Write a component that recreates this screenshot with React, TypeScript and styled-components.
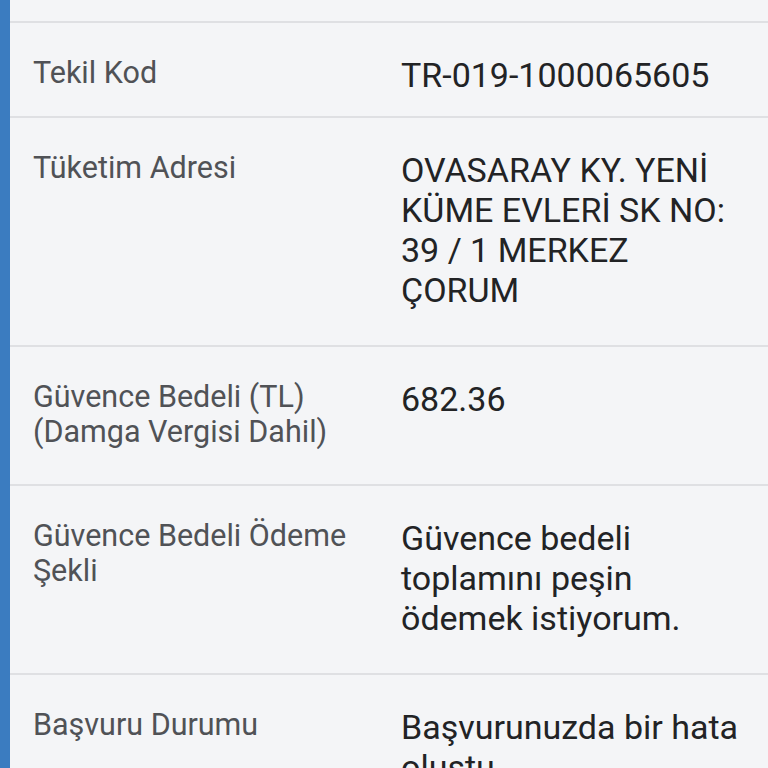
import React from "react";
import styled, { createGlobalStyle } from "styled-components";

const Global = createGlobalStyle`
  html, body {
    margin: 0;
    padding: 0;
    background: #f4f5f7;
  }
  body {
    font-family: Roboto, "Noto Sans", "Liberation Sans", sans-serif;
    overflow: hidden;
  }
`;

const Panel = styled.div`
  min-height: 768px;
  background: #f4f5f7;
  border-left: 10px solid #3b7cc0;
  box-sizing: border-box;
`;

const TopStrip = styled.div`
  height: 21px;
  border-bottom: 2px solid #dfe0e3;
`;

const Row = styled.div<{ $tight?: boolean }>`
  display: grid;
  grid-template-columns: 368px 1fr;
  padding: 32px 20px ${(p) => (p.$tight ? "21px" : "35px")} 23px;
  border-bottom: 2px solid #dfe0e3;
`;

const Label = styled.div`
  font-size: 30.5px;
  line-height: 34.5px;
  color: #505256;
  padding-right: 16px;
  padding-top: 1px;
`;

const Value = styled.div`
  font-size: 34px;
  line-height: 40px;
  color: #222325;
`;

const rows: { label: string; value: string; tight?: boolean }[] = [
  { label: "Tekil Kod", value: "TR-019-1000065605", tight: true },
  { label: "Tüketim Adresi", value: "OVASARAY KY. YENİ KÜME EVLERİ SK NO: 39 / 1 MERKEZ ÇORUM" },
  { label: "Güvence Bedeli (TL) (Damga Vergisi Dahil)", value: "682.36" },
  { label: "Güvence Bedeli Ödeme Şekli", value: "Güvence bedeli toplamını peşin ödemek istiyorum." },
  { label: "Başvuru Durumu", value: "Başvurunuzda bir hata oluştu." },
];

export default function App() {
  return (
    <>
      <Global />
      <Panel>
        <TopStrip />
        {rows.map((r) => (
          <Row key={r.label} $tight={r.tight}>
            <Label>{r.label}</Label>
            <Value>{r.value}</Value>
          </Row>
        ))}
      </Panel>
    </>
  );
}
